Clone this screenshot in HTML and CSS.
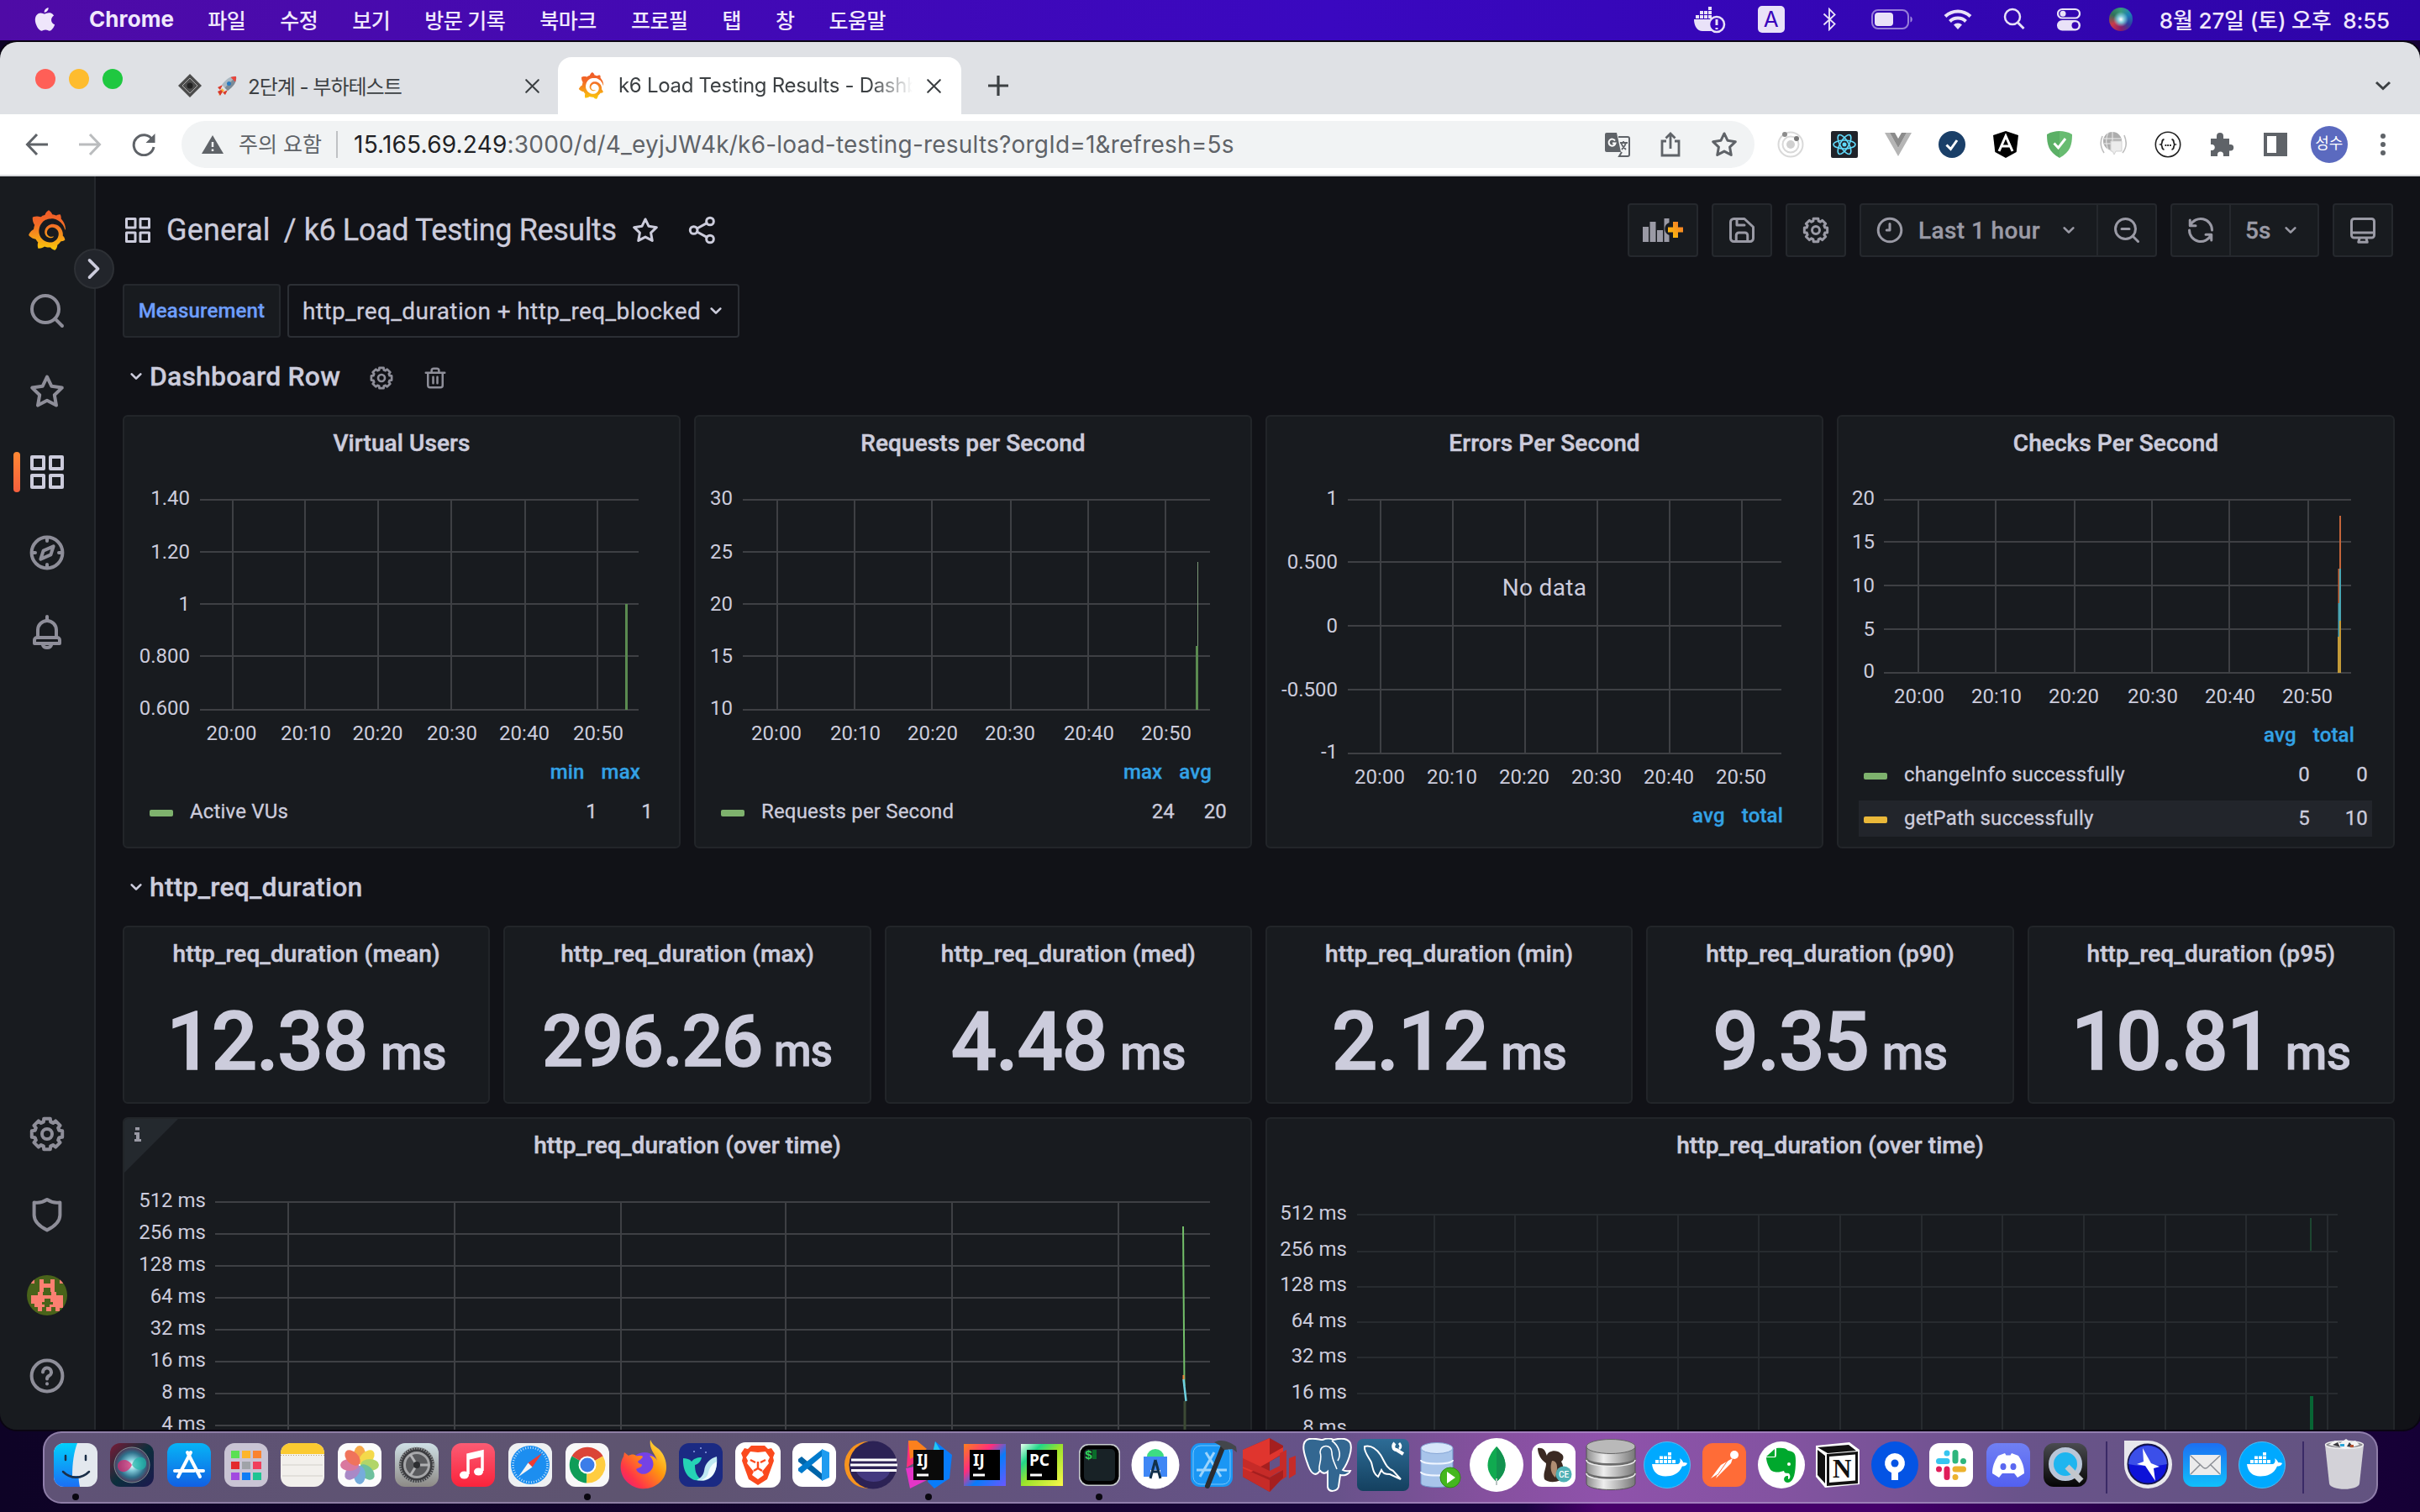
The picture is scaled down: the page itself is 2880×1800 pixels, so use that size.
FILE: index.html
```html
<!DOCTYPE html>
<html lang="ko">
<head>
<meta charset="utf-8">
<title>k6 Load Testing Results - Dashboards - Grafana</title>
<link rel="stylesheet" href="styles.css">
</head>
<body>
<svg class="defs" width="0" height="0" aria-hidden="true">
  <defs>
    <linearGradient id="gflame" x1="0" y1="0" x2="0" y2="1"><stop offset="0" stop-color="#f05a28"/><stop offset=".35" stop-color="#f26b27"/><stop offset="1" stop-color="#fbca0a"/></linearGradient>
    <linearGradient id="gplus" x1="0" y1="1" x2="1" y2="0"><stop offset="0" stop-color="#fbca0a"/><stop offset="1" stop-color="#f5712a"/></linearGradient>
    <linearGradient id="gfinder" x1="0" y1="0" x2="0" y2="1"><stop offset="0" stop-color="#00d0fc"/><stop offset="1" stop-color="#1b6ff3"/></linearGradient>
    <linearGradient id="gblue" x1="0" y1="0" x2="0" y2="1"><stop offset="0" stop-color="#07b4f6"/><stop offset="1" stop-color="#1160e4"/></linearGradient>
    <linearGradient id="gmail" x1="0" y1="0" x2="0" y2="1"><stop offset="0" stop-color="#1d6ff2"/><stop offset="1" stop-color="#10c0fb"/></linearGradient>
    <linearGradient id="gred" x1="0" y1="0" x2="0" y2="1"><stop offset="0" stop-color="#fb5c74"/><stop offset="1" stop-color="#fa233b"/></linearGradient>
    <linearGradient id="gsilver" x1="0" y1="0" x2="1" y2="0"><stop offset="0" stop-color="#8b8b8b"/><stop offset=".35" stop-color="#eee"/><stop offset="1" stop-color="#777"/></linearGradient>
    <linearGradient id="gset" x1="0" y1="0" x2="0" y2="1"><stop offset="0" stop-color="#cfe0e6"/><stop offset="1" stop-color="#8d8a86"/></linearGradient>
    <radialGradient id="gsiri" cx=".5" cy=".5" r=".55"><stop offset="0" stop-color="#fff"/><stop offset=".3" stop-color="#7fc9d8"/><stop offset=".65" stop-color="#2f6f8a"/><stop offset="1" stop-color="#5b2345"/></radialGradient>
    <linearGradient id="gsiribg" x1="0" y1="0" x2="1" y2="1"><stop offset="0" stop-color="#7a1a36"/><stop offset=".5" stop-color="#0c2f3c"/><stop offset="1" stop-color="#1c1850"/></linearGradient>
    <linearGradient id="gfox" x1="1" y1="0" x2="0" y2="1"><stop offset="0" stop-color="#fff44f"/><stop offset=".4" stop-color="#ff980e"/><stop offset=".75" stop-color="#ff3647"/><stop offset="1" stop-color="#e31587"/></linearGradient>
    <linearGradient id="gij" x1="0" y1="0" x2="1" y2="1"><stop offset="0" stop-color="#fc801d"/><stop offset=".35" stop-color="#fe2e7c"/><stop offset=".6" stop-color="#087cfa"/><stop offset="1" stop-color="#6b57ff"/></linearGradient>
    <linearGradient id="gpc" x1="0" y1="0" x2="1" y2="1"><stop offset="0" stop-color="#eafff0"/><stop offset=".25" stop-color="#21d789"/><stop offset=".5" stop-color="#9be22a"/><stop offset="1" stop-color="#fcf84a"/></linearGradient>
    <linearGradient id="gqt" x1="0" y1="0" x2="0" y2="1"><stop offset="0" stop-color="#4a4b50"/><stop offset="1" stop-color="#050505"/></linearGradient>
    <linearGradient id="gdisc" x1="0" y1="0" x2="0" y2="1"><stop offset="0" stop-color="#7080f4"/><stop offset="1" stop-color="#5360f0"/></linearGradient>
    <linearGradient id="gmysql" x1="0" y1="0" x2="0" y2="1"><stop offset="0" stop-color="#2d6c96"/><stop offset="1" stop-color="#14405f"/></linearGradient>
  </defs>
  <symbol id="i-grafana" viewBox="0 0 351 365"><path d="M342,161.2c-0.6-6.1-1.6-13.1-3.6-20.9c-2-7.7-5-16.2-9.4-25c-4.4-8.8-10.1-17.9-17.5-26.8c-2.9-3.5-6.1-6.9-9.5-10.2c5.1-20.3-6.2-37.9-6.2-37.9c-19.5-1.2-31.9,6.1-36.5,9.4c-0.8-0.3-1.5-0.7-2.3-1c-3.3-1.3-6.7-2.6-10.3-3.7c-3.5-1.1-7.1-2.1-10.8-3c-3.7-0.9-7.4-1.6-11.2-2.2c-0.7-0.1-1.3-0.2-2-0.3c-8.5-27.2-32.9-38.6-32.9-38.6c-27.3,17.3-32.4,41.5-32.4,41.5s-0.1,0.5-0.3,1.4c-1.5,0.4-3,0.9-4.5,1.3c-2.1,0.6-4.2,1.4-6.2,2.2c-2.1,0.8-4.1,1.6-6.2,2.5c-4.1,1.8-8.2,3.8-12.2,6c-3.9,2.2-7.7,4.6-11.4,7.1c-0.5-0.2-1-0.4-1-0.4c-37.8-14.4-71.3,2.9-71.3,2.9c-3.1,40.2,15.1,65.5,18.7,70.1c-0.9,2.5-1.7,5-2.5,7.5c-2.8,9.1-4.9,18.4-6.2,28.1c-0.2,1.4-0.4,2.8-0.5,4.2C18.8,192.7,8.5,228,8.5,228c29.1,33.5,63.1,35.6,63.1,35.6c0,0,0.1-0.1,0.1-0.1c4.3,7.7,9.3,15,14.9,21.9c2.4,2.9,4.8,5.6,7.4,8.3c-10.6,30.4,1.5,55.6,1.5,55.6c32.4,1.2,53.7-14.2,58.2-17.7c3.2,1.1,6.5,2.1,9.8,2.9c10,2.6,20.2,4.1,30.4,4.5c2.5,0.1,5.1,0.2,7.6,0.1l1.2,0l0.8,0l1.6,0l1.6-0.1l0,0.1c15.3,21.8,42.1,24.9,42.1,24.9c19.1-20.1,20.2-40.1,20.2-44.4l0,0c0-0.5,0-1.2,0-1.8c4-2.8,7.8-5.8,11.4-9.1c7.6-6.9,14.3-14.8,19.9-23.3c0.5-0.8,1-1.6,1.5-2.4c21.6,1.2,36.9-13.4,36.9-13.4c-3.6-22.5-16.4-33.5-19.1-35.6l-1-0.7c0.1-1.4,0.2-2.7,0.3-4.1c0.2-2.4,0.2-4.9,0.2-7.3l0-3.8l-0.2-3.5c0-0.7-0.1-1.3-0.2-1.9c-0.1-0.6-0.1-1.3-0.2-1.9l-0.2-1.9l-0.3-1.9c-0.4-2.5-0.8-4.9-1.4-7.4c-2.3-9.7-6.1-18.9-11-27.2c-5-8.3-11.2-15.6-18.3-21.8c-7-6.2-14.9-11.2-23.1-14.9c-8.3-3.7-16.9-6.1-25.5-7.2c-4.3-0.6-8.6-0.8-12.9-0.7l-3.2,0l-1.6,0.1c-0.6,0-1.2,0.1-1.7,0.1c-2.2,0.2-4.4,0.5-6.5,0.9c-8.6,1.6-16.7,4.7-23.8,9c-7.1,4.3-13.3,9.6-18.3,15.6c-5,6-8.9,12.7-11.6,19.6c-2.7,6.9-4.2,14.1-4.6,21c-0.1,1.7-0.1,3.5-0.1,5.2c0,0.4,0,0.9,0,1.3l0.1,1.4c0.1,0.8,0.1,1.7,0.2,2.5c0.3,3.5,1,6.9,1.9,10.1c1.9,6.5,4.9,12.4,8.6,17.4c3.7,5,8.2,9.1,12.9,12.4c4.7,3.2,9.8,5.5,14.8,7c5,1.5,10,2.1,14.7,2.1c1.2,0,2.3,0,3.5-0.1c1.2-0.1,2.2-0.2,3.3-0.4c1.1-0.2,2.2-0.4,3.3-0.7c1.1-0.2,2.1-0.6,3.1-0.9c2-0.7,4-1.5,5.7-2.4c1.8-0.9,3.4-2,5-3c0.4-0.3,0.9-0.6,1.3-1c1.6-1.3,1.9-3.7,0.6-5.3c-1.1-1.4-3.1-1.8-4.7-0.9c-0.4,0.2-0.8,0.4-1.2,0.6c-1.4,0.7-2.8,1.3-4.3,1.8c-1.5,0.5-3.1,0.9-4.7,1.2c-0.8,0.1-1.6,0.2-2.5,0.3c-0.8,0.1-1.7,0.1-2.5,0.1c-0.9,0-1.8,0-2.7-0.1c-0.8,0-1.8-0.1-2.7-0.3c-3.7-0.5-7.4-1.6-10.9-3.2c-3.6-1.6-7-3.8-10.1-6.6c-3.1-2.8-5.8-6.1-7.9-9.9c-2.1-3.8-3.6-8-4.3-12.4c-0.3-2.2-0.5-4.5-0.4-6.7l0.2-3.5c0.1-1.2,0.3-2.4,0.5-3.6c1.7-9.6,6.5-19,13.9-26.1c1.9-1.8,3.9-3.4,6-4.9c2.1-1.5,4.4-2.8,6.8-3.9c2.4-1.1,4.8-2,7.4-2.7c2.5-0.7,5.1-1.1,7.8-1.4c1.3-0.1,2.6-0.2,4-0.2l2.7,0l1.5,0.1c2.9,0.2,5.7,0.6,8.5,1.3c5.6,1.2,11.1,3.3,16.2,6.1c10.2,5.7,18.9,14.5,24.2,25.1c2.7,5.3,4.6,11,5.5,16.9c0.2,1.5,0.4,3,0.5,4.5l0.2,2.2l0,5.4c0,0.7-0.1,1.9-0.1,2.6c-0.1,1.6-0.3,3.3-0.5,4.9c-0.2,1.6-0.5,3.2-0.8,4.8c-0.3,1.6-0.7,3.2-1.1,4.7c-0.8,3.1-1.8,6.2-3,9.3c-2.4,6-5.6,11.8-9.4,17.1c-7.7,10.6-18.2,19.2-30.2,24.7c-6,2.7-12.3,4.7-18.8,5.7c-3.2,0.6-6.5,0.9-9.8,1l-4.6,0c-1.9,0-4-0.1-5.8-0.3c-7-0.5-13.9-1.8-20.7-3.7c-6.7-1.9-13.2-4.6-19.4-7.8c-12.3-6.6-23.4-15.6-32-26.5c-4.3-5.4-8.1-11.3-11.2-17.4c-3.1-6.1-5.6-12.6-7.4-19.1c-1.8-6.6-2.9-13.3-3.4-20.1l-0.1-1.9l0-7.6c0.1-3.3,0.4-6.8,0.8-10.2c0.4-3.4,1-6.9,1.7-10.3c0.7-3.4,1.5-6.8,2.5-10.2c1.9-6.7,4.3-13.2,7.1-19.3c5.7-12.2,13.1-23.1,22-31.8c2.2-2.2,4.5-4.2,6.9-6.2c2.4-1.9,4.9-3.7,7.5-5.4c2.5-1.7,5.2-3.2,7.9-4.6c1.3-0.7,2.7-1.4,4.1-2l4.2-1.8c2.8-1.2,5.7-2.2,8.7-3.1l4.4-1.3c1.5-0.4,3-0.8,4.5-1.1l4.6-1c2.3-0.4,4.6-0.8,6.9-1.1l5.2-0.6c1.7-0.2,2.6-0.2,3.8-0.4l3.9-0.3l3.2-0.1c2.9-0.1,5.9-0.1,8.8,0c5.8,0.2,11.5,0.9,17,1.9c11.1,2.1,21.5,5.6,31,10.3c9.5,4.6,17.9,10.3,25.3,16.5l2.7,2.4c0.9,0.8,1.7,1.6,2.6,2.4c0.9,0.8,1.7,1.6,2.5,2.4c0.8,0.8,1.6,1.6,2.4,2.5c3.1,3.3,6,6.6,8.6,10c5.2,6.7,9.4,13.5,12.7,19.9l1.2,2.4c0.4,0.8,0.8,1.6,1.1,2.4c0.4,0.8,0.7,1.5,1.1,2.3c0.3,0.8,0.7,1.5,1,2.3c1.2,3,2.4,5.9,3.3,8.6c1.5,4.4,2.6,8.3,3.5,11.7c0.3,1.4,1.6,2.3,3,2.1c1.5-0.1,2.6-1.3,2.6-2.8C342.6,170.4,342.5,166.1,342,161.2z"/></symbol>
  <symbol id="i-apps" viewBox="0 0 24 24"><path fill="currentColor" d="M10,13H3a1,1,0,0,0-1,1v7a1,1,0,0,0,1,1h7a1,1,0,0,0,1-1V14A1,1,0,0,0,10,13ZM9,20H4V15H9ZM21,2H14a1,1,0,0,0-1,1v7a1,1,0,0,0,1,1h7a1,1,0,0,0,1-1V3A1,1,0,0,0,21,2ZM20,9H15V4h5Zm1,4H14a1,1,0,0,0-1,1v7a1,1,0,0,0,1,1h7a1,1,0,0,0,1-1V14A1,1,0,0,0,21,13Zm-1,7H15V15h5ZM10,2H3A1,1,0,0,0,2,3v7a1,1,0,0,0,1,1h7a1,1,0,0,0,1-1V3A1,1,0,0,0,10,2ZM9,9H4V4H9Z"/></symbol>
  <symbol id="i-star" viewBox="0 0 24 24"><path class="st" d="M12 3.3l2.7 5.6 6.2.9-4.5 4.3 1.1 6.2L12 17.4l-5.5 2.9 1.1-6.2L3.100 9.800l6.200-.9z"/></symbol>
  <symbol id="i-share" viewBox="0 0 24 24"><g class="st"><circle cx="18" cy="5" r="2.900"/><circle cx="5.100" cy="12" r="2.900"/><circle cx="18" cy="19" r="2.900"/><path d="M7.700 10.700L15.400 6.400M7.700 13.300l7.700 4.300"/></g></symbol>
  <symbol id="i-search" viewBox="0 0 24 24"><g class="st"><circle cx="11" cy="11" r="8"/><path d="M21 21l-4.300-4.300"/></g></symbol>
  <symbol id="i-zoomout" viewBox="0 0 24 24"><g class="st"><circle cx="11" cy="11" r="8"/><path d="M21 21l-4.300-4.300M8 11h6"/></g></symbol>
  <symbol id="tooth" viewBox="0 0 24 24"><path class="st" d="M9.130 5.070L9.930 4.790 10.070 2.900H13.930L14.070 4.790 14.870 5.070"/></symbol>
  <symbol id="i-cog" viewBox="0 0 24 24"><use href="#tooth"/><use href="#tooth" transform="rotate(45 12 12)"/><use href="#tooth" transform="rotate(90 12 12)"/><use href="#tooth" transform="rotate(135 12 12)"/><use href="#tooth" transform="rotate(180 12 12)"/><use href="#tooth" transform="rotate(225 12 12)"/><use href="#tooth" transform="rotate(270 12 12)"/><use href="#tooth" transform="rotate(315 12 12)"/><circle class="st" cx="12" cy="12" r="3"/></symbol>
  <symbol id="i-trash" viewBox="0 0 24 24"><path class="st" d="M3 7h18M5 7v12a2 2 0 0 0 2 2h10a2 2 0 0 0 2-2V7M8.500 6.500V5a2 2 0 0 1 2-2h3a2 2 0 0 1 2 2v1.500M10 11v6M14 11v6"/></symbol>
  <symbol id="i-compass" viewBox="0 0 24 24"><g class="st"><circle cx="12" cy="12" r="9.200"/><path d="M12 3v2M12 19v2M3 12h2M19 12h2M15.800 8.200l-1.600 5-6 2.600 1.600-5z"/></g></symbol>
  <symbol id="i-bell" viewBox="0 0 24 24"><path class="st" d="M12 2v2M6.500 14V10a5.500 5.500 0 0 1 11 0v4M6 14.500h12a1.500 1.500 0 0 1 1.500 1.500v2h-15v-2A1.500 1.500 0 0 1 6 14.500zM9.300 18.500a2.800 2.800 0 0 0 5.400 0"/></symbol>
  <symbol id="i-shield" viewBox="0 0 24 24"><path class="st" d="M12 3c-2.500 1.700-5 2.200-7.700 1.700v7.500c0 3.800 3.200 6.700 7.700 9 4.500-2.300 7.700-5.200 7.700-9V4.700C17 5.200 14.500 4.700 12 3z"/></symbol>
  <symbol id="i-help" viewBox="0 0 24 24"><g class="st"><circle cx="12" cy="12" r="9.200"/><path d="M9.500 9.700a2.500 2.500 0 1 1 3.700 2.200c-.8.500-1.200.9-1.200 1.800M12 16.600v.1"/></g></symbol>
  <symbol id="i-down" viewBox="0 0 24 24"><path class="st" d="M8 10l4 4 4-4"/></symbol>
  <symbol id="i-right" viewBox="0 0 24 24"><path class="st" d="M9 6.500l5.500 5.500L9 17.500"/></symbol>
  <symbol id="i-save" viewBox="0 0 24 24"><path class="st" d="M5.500 3H14l7 6.500V18.500A2.500 2.500 0 0 1 18.500 21h-13A2.500 2.500 0 0 1 3 18.500v-13A2.500 2.500 0 0 1 5.500 3zM8 3.500V8h6M7.500 20.500V16a2 2 0 0 1 2-2h5a2 2 0 0 1 2 2v4.500"/></symbol>
  <symbol id="i-clock" viewBox="0 0 24 24"><g class="st"><circle cx="12" cy="12" r="9.200"/><path d="M12 7v5H9.500"/></g></symbol>
  <symbol id="i-sync" viewBox="0 0 24 24"><path class="st" d="M3.500 4v4.500H8M3.800 8.300A9 9 0 0 1 21 12M20.500 20v-4.500H16M20.200 15.700A9 9 0 0 1 3 12"/></symbol>
  <symbol id="i-monitor" viewBox="0 0 24 24"><path class="st" d="M5 3h14a2 2 0 0 1 2 2v11a2 2 0 0 1-2 2H5a2 2 0 0 1-2-2V5a2 2 0 0 1 2-2zM3 14h18M9.500 18l-1 3.500h7l-1-3.500"/></symbol>
  <symbol id="i-x" viewBox="0 0 24 24"><path class="st" d="M5 5l14 14M19 5L5 19"/></symbol>
  <symbol id="d-docker" viewBox="0 0 64 64"><circle cx="32" cy="32" r="27.500" fill="#00a9ff" stroke="#4fbdf5"/><path fill="#fff" d="M14 31h31c3-1 3-5 2-7 3 2 4 4 4 5 2 0 4 0 5 1-1 3-4 3.500-6 3.500C46 43 38 45.500 30 45.500c-9 0-15-5-16-14.500zM18 26h4v4h-4zM23 26h4v4h-4zM28 26h4v4h-4zM33 26h4v4h-4zM38 26h4v4h-4zM23 21.500h4v3.500h-4zM28 21.500h4v3.500h-4zM33 21.500h4v3.500h-4zM33 17h4v3.500h-4z"/></symbol>
</svg>

<header class="menubar">
  <nav class="menus">
    <svg class="apple" viewBox="0 0 24 30" width="26" height="32"><path fill="#efe6fb" d="M16.400 2c.1 2.800-2.200 5.300-4.700 5.200C11.400 4.600 13.900 2 16.400 2zM12.200 9c1-.1 2.800-1.300 5-1.200 1 0 3.600.4 5.200 2.900-4.300 2.700-3.500 8.500 1 10.200-.9 2.700-3.200 7-5.800 7-1.700 0-2.300-1.100-4.500-1.100s-2.900 1.100-4.500 1.100C5.600 28 1.500 20.700 1.500 15.800c0-5 3.100-7.800 6.100-7.800 2 0 3.600 1.100 4.600 1z"/></svg>
    <b class="app">Chrome</b><span>파일</span><span>수정</span><span>보기</span><span>방문 기록</span><span>북마크</span><span>프로필</span><span>탭</span><span>창</span><span>도움말</span>
  </nav>
  <div class="status">
    <svg class="s-docker" viewBox="0 0 40 34" width="40" height="34"><g fill="#e9e2f8"><path d="M2 17h22c2 0 3 1 3 2-4 2-5 8-1 12H12C6 31 2 25 2 17zM4 12h4v4H4zM9 12h4v4H9zM14 12h4v4h-4zM19 12h4v4h-4zM9 7h4v4H9zM14 7h4v4h-4zM19 7h4v4h-4zM19 2h4v4h-4z"/></g><circle cx="29" cy="23" r="9" fill="#3905bb" stroke="#e9e2f8" stroke-width="2.500"/><path d="M29 17v7M29 27v2" stroke="#e9e2f8" stroke-width="3"/></svg>
    <span class="s-a">A</span>
    <svg class="s-bt" viewBox="0 0 20 30" width="20" height="28"><path fill="none" stroke="#e9e2f8" stroke-width="2" d="M3 8l14 13-7 7V2l7 7L3 22"/></svg>
    <svg class="s-bat" viewBox="0 0 50 24" width="50" height="24"><rect x="1" y="1" width="43" height="22" rx="7" fill="none" stroke="#e9e2f8" stroke-opacity=".55" stroke-width="2"/><rect x="4" y="4" width="22" height="16" rx="4" fill="#e9e2f8"/><path d="M46.500 8.500c3 1 3 6 0 7z" fill="#e9e2f8" opacity=".6"/></svg>
    <svg class="s-wifi" viewBox="0 0 34 26" width="34" height="26"><g fill="none" stroke="#e9e2f8" stroke-width="4"><path d="M2 9.500a21.500 21.500 0 0 1 30 0M7.500 15.500a13.500 13.500 0 0 1 19 0"/></g><path fill="#e9e2f8" d="M17 25l-5-5.500a7 7 0 0 1 10 0z"/></svg>
    <svg class="s-find" viewBox="0 0 28 28" width="28" height="28"><circle cx="12" cy="11" r="9" fill="none" stroke="#e9e2f8" stroke-width="2.500"/><path d="M18.500 18l7 7" stroke="#e9e2f8" stroke-width="3"/></svg>
    <svg class="s-cc" viewBox="0 0 28 28" width="28" height="28"><rect x="1" y="2" width="26" height="10.500" rx="5.250" fill="none" stroke="#e9e2f8" stroke-width="2.200"/><circle cx="7" cy="7.200" r="3.500" fill="#e9e2f8"/><rect x="0" y="15" width="28" height="12.500" rx="6.200" fill="#e9e2f8"/><circle cx="21.500" cy="21.200" r="4" fill="#3804b4"/></svg>
    <span class="s-siri"></span>
    <span class="clock">8월 27일 (토) 오후&nbsp; 8:55</span>
  </div>
</header>

<div class="window">
  <div class="tabs">
    <div class="lights"><i class="l-r"></i><i class="l-y"></i><i class="l-g"></i></div>
    <div class="tab">
      <svg viewBox="0 0 28 28" width="28" height="28"><path fill="#4c4c4c" d="M14 0l14 14-14 14L0 14z"/><path d="M14 5l9 9-9 9-9-9z" fill="none" stroke="#aaa"/><circle cx="14" cy="14" r="3.500" fill="#222"/></svg>
      <svg class="rocket" viewBox="0 0 26 26" width="26" height="26"><path fill="#f9b233" d="M7 16l3 3-7 6z"/><path fill="#d93a2b" d="M8 12l-6 3 3 3zM14 18l-3 6-3-3zM2 20l4-2 2 2-3 5z"/><path fill="#aab8c2" d="M24 2c1 6-3 12-10 17l-7-7C12 5 18 1 24 2z"/><path fill="#7d8b96" d="M24 2c1 6-3 12-10 17l-3.500-3.500z"/><path fill="#e8453c" d="M24 2c.3 2.500-.3 4.500-1 6.500L17.500 3C20 2 22 1.700 24 2z"/><circle cx="15.500" cy="10.500" r="2.500" fill="#2a7bc0"/></svg>
      <span class="tab-t ko">2단계 - 부하테스트</span>
      <svg class="x" width="25" height="25"><use href="#i-x"/></svg>
    </div>
    <div class="tab active">
      <svg width="31" height="32" fill="url(#gflame)"><use href="#i-grafana"/></svg>
      <span class="tab-t fade">k6 Load Testing Results - Dashboards</span>
      <svg class="x" width="25" height="25"><use href="#i-x"/></svg>
    </div>
    <svg class="plus" viewBox="0 0 24 24" width="24" height="24"><path d="M12 0v24M0 12h24" stroke="#3c4043" stroke-width="3.200"/></svg>
    <svg class="tabmenu" viewBox="0 0 20 12" width="20" height="12"><path d="M2 2l8 7.500L18 2" fill="none" stroke="#3c4043" stroke-width="3"/></svg>
  </div>
  <div class="toolbar">
    <div class="navbtns">
      <svg viewBox="0 0 28 28" width="28" height="28"><path d="M27 14H3M14 2L2.500 14 14 26" fill="none" stroke="#5f6368" stroke-width="3"/></svg>
      <svg viewBox="0 0 28 28" width="28" height="28"><path d="M1 14h24M14 2l11.500 12L14 26" fill="none" stroke="#babcbe" stroke-width="3"/></svg>
      <svg viewBox="0 0 30 28" width="30" height="28"><path d="M25.500 8.500A12 12 0 1 0 27 17" fill="none" stroke="#5f6368" stroke-width="3"/><path d="M28.500 1v11H17.500z" fill="#5f6368"/></svg>
    </div>
    <div class="omnibox">
      <svg viewBox="0 0 26 22" width="26" height="22"><path fill="#5f6368" d="M13 0l13 22H0z"/><path d="M13 8v6M13 16.500V19" stroke="#f1f3f4" stroke-width="2.500"/></svg>
      <span class="warn">주의 요함</span>
      <span class="url"><b>15.165.69.249</b>:3000/d/4_eyjJW4k/k6-load-testing-results?orgId=1&amp;refresh=5s</span>
      <svg viewBox="0 0 30 30" width="30" height="30"><path fill="#5f6368" d="M2 1h12l5 23H2a2 2 0 0 1-2-2V3a2 2 0 0 1 2-2z"/><path d="M16 6h11a2 2 0 0 1 2 2v19a2 2 0 0 1-2 2H17l3-5" fill="none" stroke="#5f6368" stroke-width="2"/><path d="M12 10.500a4 4 0 1 0 .5 3H9" fill="none" stroke="#fff" stroke-width="2"/><path d="M18 13h9M22 11v2M25 13c-1 4-3 6-5 8M19.500 14c1 3 3 5 5.500 7" fill="none" stroke="#5f6368" stroke-width="1.800"/></svg>
      <svg viewBox="0 0 24 30" width="24" height="30"><path d="M7 11H2v17h20V11h-5M12 20V2M6.500 7.500L12 2l5.500 5.500" fill="none" stroke="#5f6368" stroke-width="2.800"/></svg>
      <svg class="bm" width="36" height="36"><use href="#i-star"/></svg>
    </div>
    <div class="exts">
      <svg viewBox="0 0 32 32"><g fill="none" stroke="#d9d9d9" stroke-width="2"><circle cx="16" cy="16" r="14.500"/><circle cx="16" cy="16" r="9.500"/></g><circle cx="16" cy="16" r="5" fill="#d0d0d0"/><circle cx="9" cy="4" r="3" fill="#8c8c8c"/><circle cx="23" cy="9" r="3" fill="#777"/></svg>
      <svg viewBox="0 0 32 32"><rect width="32" height="32" rx="2" fill="#20232a"/><g fill="none" stroke="#61dafb" stroke-width="1.600"><ellipse cx="16" cy="16" rx="13" ry="5"/><ellipse cx="16" cy="16" rx="13" ry="5" transform="rotate(60 16 16)"/><ellipse cx="16" cy="16" rx="13" ry="5" transform="rotate(120 16 16)"/></g><circle cx="16" cy="16" r="2.500" fill="#61dafb"/></svg>
      <svg viewBox="0 0 32 32"><path fill="#b5b5b5" d="M0 2h6l10 18L26 2h6L16 30z"/><path fill="#8b8b8b" d="M6 2h6l4 7 4-7h6L16 20z"/></svg>
      <svg viewBox="0 0 32 32"><circle cx="16" cy="16" r="16" fill="#1a3f68"/><path d="M9.500 16.500l5 5L22 11" fill="none" stroke="#fff" stroke-width="3"/></svg>
      <svg viewBox="0 0 32 32"><path fill="#000" d="M16 0l15 5-2.300 20L16 32 3.300 25 1 5z"/><path d="M8 24l8-18 8 18M11.500 18h9" fill="none" stroke="#fff" stroke-width="3"/></svg>
      <svg viewBox="0 0 32 32"><path fill="#68bc71" d="M16 0c5 0 10 1 15 4 0 12-2 21-15 28z"/><path fill="#5bb066" d="M16 0C11 0 6 1 1 4c0 12 2 21 15 28z"/><path d="M9.500 14.500l5 5.500L23 9" fill="none" stroke="#fff" stroke-width="3"/></svg>
      <svg viewBox="0 0 32 32"><circle cx="15" cy="12" r="11" fill="#adadad"/><path d="M5 9h20M5 15h20M15 1v22M10 2c-3 6-3 14 0 20" stroke="#eee" fill="none"/><path d="M3 6c-3 7-2 14 2 20M29 5c3 7 3 15-2 21" stroke="#bdbdbd" stroke-width="1.600" fill="none"/><path fill="#ececec" stroke="#d2d2d2" d="M13 12h13v12h-7l-2 4-2-4h-2z"/></svg>
      <svg viewBox="0 0 32 32"><circle cx="16" cy="16" r="14.700" fill="#fff" stroke="#222" stroke-width="1.600"/><path d="M11.500 10c-4 0-1 5-4 6 3 1 0 6 4 6M20.500 10c4 0 1 5 4 6-3 1 0 6-4 6M12.500 17h1.800M15.200 17H17M18 17h1.800" fill="none" stroke="#222" stroke-width="1.800"/></svg>
      <svg viewBox="0 0 32 32"><path fill="#5f6368" d="M3 9h7V6a4 4 0 0 1 8 0v3h7v7h1.500a3.700 3.700 0 0 1 0 7.400H25V30h-7v-2a3.500 3.500 0 0 0-7 0v2H3v-7h2a3.600 3.600 0 0 0 0-7H3z"/></svg>
      <svg viewBox="0 0 32 32"><path fill="#5f6368" fill-rule="evenodd" d="M2 2h28v28H2zM6 6v20h11V6z"/></svg>
      <span class="avatar">성수</span>
      <svg viewBox="0 0 32 32"><g fill="#5f6368"><circle cx="16" cy="6" r="3"/><circle cx="16" cy="16" r="3"/><circle cx="16" cy="26" r="3"/></g></svg>
    </div>
  </div>

  <div class="grafana">
    <aside class="side">
      <svg class="logo" width="46" height="48" fill="url(#gflame)"><use href="#i-grafana"/></svg>
      <svg><use href="#i-search"/></svg>
      <svg><use href="#i-star"/></svg>
      <svg class="on"><use href="#i-apps"/></svg>
      <svg><use href="#i-compass"/></svg>
      <svg><use href="#i-bell"/></svg>
      <svg class="push"><use href="#i-cog"/></svg>
      <svg><use href="#i-shield"/></svg>
      <svg class="face" viewBox="0 0 48 48"><clipPath id="round"><circle cx="24" cy="24" r="24"/></clipPath><g clip-path="url(#round)"><path fill="#49631a" d="M0 0h48v48H0z"/><path fill="#fb8071" d="M15 5h5v5h8V5h5v15h-5v-5h-8v5h-5zM5 5h4v5H5zM39 5h4v5h-4zM5 24h8v-4h6v4h10v-4h6v4h8v15h-4v4h-5v-5h-5v5h-6v-5h-5v5h-5v-5H9v-4H5z"/><path fill="#49631a" d="M18 32h3v-4h7v4h3v3h-4v3h-6v-3h-3z"/></g></svg>
      <svg><use href="#i-help"/></svg>
      <button class="expand" aria-label="Expand"><svg><use href="#i-right"/></svg></button>
      <i class="mark"></i>
    </aside>

    <main class="main">
      <div class="head">
        <h1><svg width="36" height="36"><use href="#i-apps"/></svg><span>General</span><span class="sl">/</span><span class="name">k6 Load Testing Results</span><svg class="h-star" width="36" height="36"><use href="#i-star"/></svg><svg class="h-share" width="36" height="36"><use href="#i-share"/></svg></h1>
        <div class="actions">
          <div class="btn wide"><svg viewBox="0 0 48 28" width="48" height="28"><path fill="#9a9aa5" d="M0 10h7v18H0zM8.500 4h7v24h-7zM17 14h7v14h-7zM25.500 0h6v5a8 8 0 0 0 0 15v8h-6z"/><path fill="url(#gplus)" d="M36 4h6v6.500h6v6h-6V23h-6v-6.500h-6v-6h6z"/></svg></div>
          <div class="btn"><svg><use href="#i-save"/></svg></div>
          <div class="btn"><svg><use href="#i-cog"/></svg></div>
          <div class="group"><div class="time"><svg><use href="#i-clock"/></svg><span>Last 1 hour</span><svg class="dn"><use href="#i-down"/></svg></div><div class="seg"><svg><use href="#i-zoomout"/></svg></div></div>
          <div class="group"><div class="seg first"><svg><use href="#i-sync"/></svg></div><div class="every"><span>5s</span><svg class="dn"><use href="#i-down"/></svg></div></div>
          <div class="btn"><svg><use href="#i-monitor"/></svg></div>
        </div>
      </div>
      <div class="vars"><label>Measurement</label><div class="select">http_req_duration + http_req_blocked<svg class="dn"><use href="#i-down"/></svg></div></div>

      <div class="rowhead"><svg class="dn"><use href="#i-down"/></svg><h2>Dashboard Row</h2><svg class="r-cog"><use href="#i-cog"/></svg><svg class="r-bin"><use href="#i-trash"/></svg></div>
      <div class="grid4">
        <section class="panel">
          <h3>Virtual Users</h3>
          <svg class="chart" viewBox="148 560 660 334" height="334">
            <path class="g" d="M238 595H760M238 657H760M238 719H760M238 781H760M238 845H760M277 595V845M363 595V845M450 595V845M537 595V845M625 595V845M711 595V845"/>
            <path stroke="#5a8a50" stroke-width="3" d="M745.500 719V845"/>
            <g class="y"><text x="226" y="601">1.40</text><text x="226" y="665">1.20</text><text x="226" y="727">1</text><text x="226" y="789">0.800</text><text x="226" y="851">0.600</text></g>
            <g class="xl"><text x="275.500" y="881">20:00</text><text x="364" y="881">20:10</text><text x="449.500" y="881">20:20</text><text x="538" y="881">20:30</text><text x="624" y="881">20:40</text><text x="712" y="881">20:50</text></g>
          </svg>
          <div class="legend">
            <div class="lh"><span>min</span><span>max</span></div>
            <div class="lr"><i class="green"></i><span class="nm">Active VUs</span><span class="v">1</span><span class="v v2">1</span></div>
          </div>
        </section>
        <section class="panel">
          <h3>Requests per Second</h3>
          <svg class="chart" viewBox="828 560 660 334" height="334">
            <path class="g" d="M884 595H1440M884 657H1440M884 719H1440M884 781H1440M884 845H1440M925 595V845M1017 595V845M1109 595V845M1203 595V845M1295 595V845M1387 595V845"/>
            <path stroke="#7d9a78" stroke-width="1" d="M1425.500 669V770"/><path stroke="#5a8a50" stroke-width="3" d="M1424.500 769V845"/>
            <g class="y"><text x="872" y="601">30</text><text x="872" y="665">25</text><text x="872" y="727">20</text><text x="872" y="789">15</text><text x="872" y="851">10</text></g>
            <g class="xl"><text x="924" y="881">20:00</text><text x="1018" y="881">20:10</text><text x="1110" y="881">20:20</text><text x="1202" y="881">20:30</text><text x="1296" y="881">20:40</text><text x="1388" y="881">20:50</text></g>
          </svg>
          <div class="legend">
            <div class="lh"><span>max</span><span>avg</span></div>
            <div class="lr"><i class="green"></i><span class="nm">Requests per Second</span><span class="v">24</span><span class="v v2 n">20</span></div>
          </div>
        </section>
        <section class="panel">
          <h3>Errors Per Second</h3>
          <svg class="chart" viewBox="1508 560 660 386" height="386">
            <path class="g" d="M1604 595H2120M1604 669H2120M1604 745H2120M1604 821H2120M1604 897H2120M1643 595V897M1729 595V897M1815 595V897M1901 595V897M1987 595V897M2073 595V897"/>
            <text class="nodata" x="1838" y="709">No data</text>
            <g class="y"><text x="1592" y="601">1</text><text x="1592" y="677">0.500</text><text x="1592" y="753">0</text><text x="1592" y="829">-0.500</text><text x="1592" y="903">-1</text></g>
            <g class="xl"><text x="1642" y="933">20:00</text><text x="1728" y="933">20:10</text><text x="1814" y="933">20:20</text><text x="1900" y="933">20:30</text><text x="1986" y="933">20:40</text><text x="2072" y="933">20:50</text></g>
          </svg>
          <div class="legend"><div class="lh"><span>avg</span><span>total</span></div></div>
        </section>
        <section class="panel checks">
          <h3>Checks Per Second</h3>
          <svg class="chart" viewBox="2188 560 660 290" height="290">
            <path class="g" d="M2242 595H2798M2242 645H2798M2242 697H2798M2242 749H2798M2242 801H2798M2283 595V801M2375 595V801M2469 595V801M2561 595V801M2653 595V801M2747 595V801"/>
            <path stroke="#c4653a" stroke-width="2" d="M2785 614V677M2783.500 677V718"/><path stroke="#4aa6b3" stroke-width="2" d="M2785 677V739M2783.500 718V758"/><path stroke="#c39a38" stroke-width="2" d="M2785 739V801M2783 758V801"/>
            <g class="y"><text x="2231" y="601">20</text><text x="2231" y="653">15</text><text x="2231" y="705">10</text><text x="2231" y="757">5</text><text x="2231" y="807">0</text></g>
            <g class="xl"><text x="2284" y="837">20:00</text><text x="2376" y="837">20:10</text><text x="2468" y="837">20:20</text><text x="2562" y="837">20:30</text><text x="2654" y="837">20:40</text><text x="2746" y="837">20:50</text></g>
          </svg>
          <div class="legend">
            <div class="lh"><span>avg</span><span>total</span></div>
            <div class="lr"><i class="green"></i><span class="nm">changeInfo successfully</span><span class="v">0</span><span class="v v2 t">0</span></div>
            <div class="lr alt"><i class="gold"></i><span class="nm">getPath successfully</span><span class="v">5</span><span class="v v2 t">10</span></div>
          </div>
        </section>
      </div>

      <div class="rowhead"><svg class="dn"><use href="#i-down"/></svg><h2>http_req_duration</h2></div>
      <div class="grid6">
        <section class="panel stat"><h3>http_req_duration (mean)</h3><p>12.38<small>ms</small></p></section>
        <section class="panel stat sm"><h3>http_req_duration (max)</h3><p>296.26<small>ms</small></p></section>
        <section class="panel stat"><h3>http_req_duration (med)</h3><p>4.48<small>ms</small></p></section>
        <section class="panel stat"><h3>http_req_duration (min)</h3><p>2.12<small>ms</small></p></section>
        <section class="panel stat"><h3>http_req_duration (p90)</h3><p>9.35<small>ms</small></p></section>
        <section class="panel stat"><h3>http_req_duration (p95)</h3><p>10.81<small>ms</small></p></section>
      </div>
      <div class="grid2">
        <section class="panel tall">
          <svg class="corner" viewBox="0 0 64 64" width="64" height="64"><path fill="#24292e" d="M0 0h64L0 64z"/><path fill="#9a9aa5" d="M13 10h5v3.500h-5zM12 16h6v8h2v3h-8v-3h2v-5h-2z"/></svg>
          <h3>http_req_duration (over time)</h3>
          <svg class="chart" viewBox="148 1396 1340 306" height="306">
            <path class="g" d="M256 1431H1440M256 1469H1440M256 1507H1440M256 1545H1440M256 1583H1440M256 1621H1440M256 1659H1440M256 1697H1440M343 1431V1702M541 1431V1702M739 1431V1702M935 1431V1702M1133 1431V1702M1331 1431V1702"/>
            <path stroke="#73bf69" stroke-width="2" d="M1408 1460L1409.500 1650"/><path stroke="#3c4a35" stroke-width="3" d="M1410 1668V1702"/><path stroke="#ef843c" stroke-width="2" d="M1408.500 1637V1643"/><path stroke="#6ed0e0" stroke-width="2.500" d="M1408.500 1642L1411.500 1668"/>
            <g class="y"><text x="245" y="1437">512 ms</text><text x="245" y="1475">256 ms</text><text x="245" y="1513">128 ms</text><text x="245" y="1551">64 ms</text><text x="245" y="1589">32 ms</text><text x="245" y="1627">16 ms</text><text x="245" y="1665">8 ms</text><text x="245" y="1703">4 ms</text></g>
          </svg>
        </section>
        <section class="panel tall">
          <h3>http_req_duration (over time)</h3>
          <svg class="chart" viewBox="1508 1396 1340 306" height="306">
            <path class="g faint" d="M1615 1446H2782M1615 1490H2782M1615 1532H2782M1615 1574H2782M1615 1616H2782M1615 1659H2782M1707 1446V1702M1803 1446V1702M1901 1446V1702M1997 1446V1702M2093 1446V1702M2190 1446V1702M2287 1446V1702M2383 1446V1702M2480 1446V1702M2577 1446V1702M2673 1446V1702M2770 1446V1702"/>
            <path stroke="#1d4630" stroke-width="2" d="M2750 1450V1489"/><path stroke="#086534" stroke-width="4" d="M2751 1662V1702"/>
            <g class="y"><text x="1603" y="1452">512 ms</text><text x="1603" y="1495">256 ms</text><text x="1603" y="1537">128 ms</text><text x="1603" y="1580">64 ms</text><text x="1603" y="1622">32 ms</text><text x="1603" y="1665">16 ms</text><text x="1603" y="1707">8 ms</text></g>
          </svg>
        </section>
      </div>
    </main>
  </div>
</div>

<footer class="dock">
  <div class="ic run"><svg viewBox="0 0 64 64"><rect x="6" y="6" width="52" height="52" rx="12" fill="#e3e8ee"/><path fill="url(#gfinder)" d="M34 6H18A12 12 0 0 0 6 18v28a12 12 0 0 0 12 12h19c-1-5-1.500-9-1.500-13H28C28 30 30 16 34 6z"/><path d="M20 21v5M44 21v5M17 40c9 9 22 9 31 0" stroke="#1b2f48" stroke-width="2.500" fill="none" stroke-linecap="round"/></svg></div>
  <div class="ic"><svg viewBox="0 0 64 64"><rect x="6" y="6" width="52" height="52" rx="12" fill="url(#gsiribg)"/><circle cx="32" cy="32" r="21" fill="url(#gsiri)" stroke="#7c8e92"/><path fill="#d8286f" opacity=".75" d="M32 32c-6-10-18-6-17 2s12 9 17-2z"/><path fill="#1fb6a8" opacity=".7" d="M32 32c3-12 17-12 17-2s-12 10-17 2z"/></svg></div>
  <div class="ic"><svg viewBox="0 0 64 64"><rect x="6" y="6" width="52" height="52" rx="12" fill="url(#gblue)"/><path d="M34 17L19 46M30 17l15 29M15 39h23M42 39h7" stroke="#fff" stroke-width="4" stroke-linecap="round"/></svg></div>
  <div class="ic"><svg viewBox="0 0 64 64"><rect x="6" y="6" width="52" height="52" rx="12" fill="#c9c4d4"/><g><path fill="#5be052" d="M14 15h10v9H14z"/><path fill="#fdb52a" d="M27 15h10v9H27z"/><path fill="#fa8330" d="M40 15h10v9H40z"/><path fill="#e32a2d" d="M14 28h10v9H14z"/><path fill="#a0a3a8" d="M27 28h10v9H27z"/><path fill="#f03f5c" d="M40 28h10v9H40z"/><path fill="#a24ae0" d="M14 41h10v9H14z"/><path fill="#0f7df5" d="M27 41h10v9H27z"/><path fill="#1fc493" d="M40 41h10v9H40z"/></g></svg></div>
  <div class="ic"><svg viewBox="0 0 64 64"><rect x="6" y="6" width="52" height="52" rx="12" fill="#f2f0ec"/><path fill="#fbca31" d="M18 6h28a12 12 0 0 1 12 12v1H6v-1A12 12 0 0 1 18 6z"/><path d="M6 20.500h52" stroke="#b8a676" stroke-dasharray="1 2"/><path d="M8 32h48M8 45h48" stroke="#d3d0ca"/></svg></div>
  <div class="ic"><svg viewBox="0 0 64 64"><rect x="6" y="6" width="52" height="52" rx="12" fill="#fcfcfc"/><g opacity=".85"><ellipse cx="32" cy="20" rx="7" ry="11" fill="#f79b2c"/><ellipse cx="32" cy="20" rx="7" ry="11" fill="#f3d42b" transform="rotate(45 32 32)"/><ellipse cx="32" cy="20" rx="7" ry="11" fill="#a5cf50" transform="rotate(90 32 32)"/><ellipse cx="32" cy="20" rx="7" ry="11" fill="#55b68d" transform="rotate(135 32 32)"/><ellipse cx="32" cy="20" rx="7" ry="11" fill="#5f9fd6" transform="rotate(180 32 32)"/><ellipse cx="32" cy="20" rx="7" ry="11" fill="#9b76bd" transform="rotate(225 32 32)"/><ellipse cx="32" cy="20" rx="7" ry="11" fill="#d4638f" transform="rotate(270 32 32)"/><ellipse cx="32" cy="20" rx="7" ry="11" fill="#ee5c40" transform="rotate(315 32 32)"/></g></svg></div>
  <div class="ic"><svg viewBox="0 0 64 64"><rect x="6" y="6" width="52" height="52" rx="12" fill="url(#gset)"/><circle cx="32" cy="32" r="21" fill="#3c3d40"/><circle cx="32" cy="32" r="20" fill="none" stroke="#909294" stroke-width="3" stroke-dasharray="1.500 1.500"/><circle cx="32" cy="32" r="14.500" fill="#5a5b5e" stroke="#a5a6a8" stroke-width="3"/><path d="M32 32h15M32 32l-8-13M32 32l-8 13" stroke="#b0b1b3" stroke-width="3"/><circle cx="32" cy="32" r="4" fill="#2c2d30"/></svg></div>
  <div class="ic"><svg viewBox="0 0 64 64"><rect x="6" y="6" width="52" height="52" rx="12" fill="url(#gred)"/><path d="M26 43V20l17-4v23" stroke="#fff" stroke-width="3.500" fill="none"/><path d="M26 20l17-4v6l-17 4z" fill="#fff"/><ellipse cx="21.500" cy="44" rx="5.500" ry="4.500" fill="#fff"/><ellipse cx="38.500" cy="40" rx="5.500" ry="4.500" fill="#fff"/></svg></div>
  <div class="ic"><svg viewBox="0 0 64 64"><rect x="6" y="6" width="52" height="52" rx="12" fill="#eef0f2"/><circle cx="32" cy="32" r="23" fill="#1c8ef0"/><circle cx="32" cy="32" r="20.500" fill="none" stroke="#bfe0fa" stroke-width="2.500" stroke-dasharray="1 2"/><path fill="#f03c32" d="M46 18L29.500 29.500l5 5z"/><path fill="#f4f4f4" d="M18 46l11.500-16.500 5 5z"/></svg></div>
  <div class="ic run"><svg viewBox="0 0 64 64"><rect x="6" y="6" width="52" height="52" rx="12" fill="#f8f8f8"/><path fill="#db4437" d="M32 32L13.500 21.500a21.500 21.500 0 0 1 37.100 0z"/><path fill="#0f9d58" d="M32 32L31 53.500A21.500 21.500 0 0 1 13.500 21.500z"/><path fill="#ffcd40" d="M32 32l18.600-10.500A21.500 21.500 0 0 1 31 53.500z"/><circle cx="32" cy="32" r="10.500" fill="#fff"/><circle cx="32" cy="32" r="8.500" fill="#3b7de9"/></svg></div>
  <div class="ic"><svg viewBox="0 0 64 64"><circle cx="33" cy="34" r="17" fill="#7542e5"/><path fill="url(#gfox)" d="M40 2c2 6 8 9 11 12 10 11 11 28 1 38-11 11-29 11-40 0C3 43 3 30 8 22l1-5 5 4c3-2 7-2 9 0 2 1 6-1 8 1-1 3-4 4-6 6 1 3 5 3 5 4-1 4-5 3-7 5 2 6 10 8 16 3 7-6 5-14 0-19 4 0 8 3 9 6C46 18 38 14 40 2z"/></svg></div>
  <div class="ic"><svg viewBox="0 0 64 64"><rect x="6" y="6" width="52" height="52" rx="12" fill="#1b2a83"/><path fill="#25d3b5" d="M11 24c4 0 8 1 10 4 2-3 6-5 12-5-1 5-4 8-8 9 0 8 2 13 8 18-13 3-23-8-22-26z"/><path fill="#bfe9f2" d="M27 50c16 4 26-8 24-28-8 2-14 8-15 17-1 6-5 9-9 11z"/><path fill="#f2fbff" d="M33 50c12 0 18-10 18-22-6 3-9 8-10 13-1 5-4 7-8 9z"/><g fill="#8fa2e8"><circle cx="24" cy="16" r="1"/><circle cx="32" cy="12" r="1"/><circle cx="38" cy="17" r="1"/></g></svg></div>
  <div class="ic"><svg viewBox="0 0 64 64"><rect x="5" y="5" width="54" height="54" rx="12" fill="#fff"/><path fill="#fb4a1e" d="M24 9h16l4 4 4-1 4 6-2 5 1 4-8 22-11 7-11-7-8-22 1-4-2-5 4-6 4 1z"/><path fill="#fff" d="M32 17l9-1 5 7-2 4 1 3-8 10 2 4-7 5-7-5 2-4-8-10 1-3-2-4 5-7z"/><path d="M23 26l6 3M41 26l-6 3M27 39l5-3 5 3M32 28v8" stroke="#fb4a1e" stroke-width="2.500" fill="none"/></svg></div>
  <div class="ic"><svg viewBox="0 0 64 64"><rect x="6" y="6" width="52" height="52" rx="12" fill="#fff"/><path fill="#0065a9" d="M13 25l4-3 25 21v8L13 28z"/><path fill="#007acc" d="M13 39l4 3 25-21v-8L13 36z"/><path fill="#1f9cf0" d="M41 13l9 4v30l-9 4z"/></svg></div>
  <div class="ic"><svg viewBox="0 0 64 64"><circle cx="28" cy="32" r="28" fill="#f7941e"/><circle cx="34" cy="32" r="28.500" fill="#2c2255"/><path d="M14 40h40c-4 14-30 18-40 0z" fill="#443a80"/><path d="M8 26h54M7 32h56M8 38.500h54" stroke="#fff" stroke-width="3"/></svg></div>
  <div class="ic run"><svg viewBox="0 0 64 64"><path fill="#fe2e7c" d="M8 3l14 5-4 20-12 7z"/><path fill="#fc801d" d="M8 3l10 0 12 10-20 12z"/><path fill="#087cfa" d="M40 4l20 16-3 28-18 12-8-8z"/><path fill="#e435c8" d="M5 36l20-4 5 18-20 10z"/><path fill="#22c7f5" d="M40 4l8 14-12 4z"/><rect x="14" y="14" width="36" height="36" fill="#0a0a0a"/><text class="lg" x="18" y="33">IJ</text><path d="M18 44h14" stroke="#fff" stroke-width="3"/></svg></div>
  <div class="ic"><svg viewBox="0 0 64 64"><rect x="7" y="7" width="50" height="50" fill="url(#gij)"/><rect x="14" y="14" width="36" height="36" fill="#000"/><text class="lg" x="18" y="33">IJ</text><path d="M18 44h14" stroke="#fff" stroke-width="3"/></svg></div>
  <div class="ic"><svg viewBox="0 0 64 64"><rect x="7" y="7" width="50" height="50" fill="url(#gpc)"/><rect x="14" y="14" width="36" height="36" fill="#000"/><text class="lg" x="17" y="33">PC</text><path d="M18 44h14" stroke="#fff" stroke-width="3"/></svg></div>
  <div class="ic run"><svg viewBox="0 0 64 64"><rect x="8" y="7" width="49" height="50" rx="11" fill="#c8ccd0"/><rect x="9.500" y="8.500" width="46" height="47" rx="10" fill="#000"/><rect x="14" y="13" width="37" height="38" rx="5" fill="#182226"/><text class="sh" x="15" y="25">$</text><path fill="#0a6b2a" d="M24 14h5v11h-5z"/></svg></div>
  <div class="ic"><svg viewBox="0 0 64 64"><circle cx="32" cy="32" r="28.500" fill="#fff"/><path fill="#3ddc84" d="M22 22a10 9 0 0 1 20 0z"/><path fill="#3f87f5" d="M18 22h28v24h-8v-8H26v8h-8z"/><path d="M32 26l-6 22M32 26l6 22M27 40h10" stroke="#12304a" stroke-width="3" fill="none"/></svg></div>
  <div class="ic"><svg viewBox="0 0 64 64"><rect x="6" y="6" width="50" height="52" rx="11" fill="#1a96f4"/><rect x="9" y="9" width="44" height="46" rx="9" fill="none" stroke="#79c6fb"/><path d="M34 17L17 46M24 17l18 29M13 38h36" stroke="#9bd4fc" stroke-width="3"/><path d="M45 9L26 57" stroke="#2b2d31" stroke-width="6" stroke-linecap="round"/><path fill="#43464b" d="M34 5c8-5 20 0 26 5l1 7-5-4-10 1-5-5z"/></svg></div>
  <div class="ic"><svg viewBox="0 0 64 64"><path fill="#a51f1f" d="M32 0l16 9v10L32 28v36L0 46V14z"/><path fill="#e0352e" d="M32 0v20l16-9v7L32 28 0 46V14z"/><path fill="#c62b28" d="M0 24l32 15 16-8v6L32 47 0 34zM0 36l32 14 16-8v5L32 64 0 46z"/><path fill="#c62b28" d="M44 18l8-4v32l-8 5zM55 24l8-3v22l-8 5z"/><path fill="#a51f1f" d="M32 47l16-9v9L32 64z"/></svg></div>
  <div class="ic"><svg viewBox="0 0 64 64"><path fill="#336791" stroke="#fff" stroke-width="2" d="M12 1c8-1 12 1 16 1 5-2 9-2 13 0 8-2 17-2 20 4 3 8-3 24-9 32 3 2 6 1 9 1-2 5-8 6-12 5l-2 14c-2 6-12 7-13 0V40c-4 4-9 0-9-2-4 8-10 6-14-5C7 22 0 4 12 1z"/><path d="M25 17c0-10 14-10 14 0 0 8 3 12 6 20M25 17c3 8-2 14-1 21M39 3c8 6 12 16 7 24" fill="none" stroke="#fff" stroke-width="1.600"/></svg></div>
  <div class="ic"><svg viewBox="0 0 64 64"><rect x="1" y="1" width="62" height="62" rx="7" fill="url(#gmysql)"/><path d="M10 10c8-2 14 3 19 10 5 8 6 15 15 19l9 10-13-6c-6 0-8-1-10-5l-4 8c-6-4-6-10-8-17-2-5-9-12-8-19z" fill="none" stroke="#fff" stroke-width="2"/><path d="M46 6c-3 3-2 8 2 8l8 5" stroke="#fff" stroke-width="4" fill="none"/><path d="M51 6c2 2 3 5 0 7" stroke="#fff" stroke-width="3" fill="none"/></svg></div>
  <div class="ic"><svg viewBox="0 0 64 64"><path fill="#a8c4ea" stroke="#6f94c9" d="M9 12v42c0 6 38 6 38 0V12z"/><path d="M9 26c0 6 38 6 38 0M9 40c0 6 38 6 38 0" fill="none" stroke="#f0f6ff" stroke-width="2"/><ellipse cx="28" cy="12" rx="19" ry="6.500" fill="#d7e6fa" stroke="#86a6d6"/><circle cx="44" cy="47" r="12" fill="#44b71f" stroke="#2f8a12"/><path fill="#fff" d="M40 40l10 7-10 7z"/></svg></div>
  <div class="ic"><svg viewBox="0 0 64 64"><circle cx="32" cy="32" r="32" fill="#fff"/><path fill="#10aa50" d="M32 10c14 15 14 30 0 42C18 40 18 25 32 10z"/><path fill="#12924f" d="M32 10c14 15 14 30 0 42z"/><path d="M32 48v8" stroke="#b8c4c2" stroke-width="2"/></svg></div>
  <div class="ic"><svg viewBox="0 0 64 64"><rect x="6" y="6" width="52" height="52" rx="12" fill="#fff"/><path fill="#3b2a22" d="M13 12c8-1 9 4 11 9 0-6 12-8 16-3 5 2 4 8 1 10 4 6 3 16-1 22-8 4-16 2-19-1-2-8 2-12 2-19-6-4-10-11-10-18z"/><path fill="#b08e73" d="M30 27c6 0 8 6 4 20-5-4-7-12-4-20z"/><circle cx="44" cy="43" r="9.500" fill="#4fb0b5"/><text class="ce" x="38" y="47">CE</text></svg></div>
  <div class="ic"><svg viewBox="0 0 64 64"><path fill="url(#gsilver)" stroke="#555" d="M3 10v44c0 10 58 10 58 0V10z"/><path d="M3 24c0 10 58 10 58 0M3 40c0 10 58 10 58 0" fill="none" stroke="#6c6c6c" stroke-width="3"/><path d="M3 26c0 10 58 10 58 0M3 42c0 10 58 10 58 0" fill="none" stroke="#eee" stroke-width="1.500"/><ellipse cx="32" cy="10" rx="29" ry="8.500" fill="#b9b9b9" stroke="#666"/></svg></div>
  <div class="ic"><svg><use href="#d-docker"/></svg></div>
  <div class="ic"><svg viewBox="0 0 64 64"><rect x="6" y="6" width="52" height="52" rx="12" fill="#ff6c37"/><circle cx="44" cy="20" r="5" fill="#fff"/><path fill="#fff" d="M42 24L28 32 16 48l8-5-2 5 18-18z"/><path d="M38 24l-14 20" stroke="#ff6c37"/></svg></div>
  <div class="ic"><svg viewBox="0 0 64 64"><circle cx="32" cy="32" r="28" fill="#fff"/><path fill="#00a82d" d="M26 12c7-1 12 0 14 3 8 1 9 4 9 12 0 14-2 25-9 26-7 0-6-9 0-8v4c3 0 3-5 1-7-4-1-5 1-6-3-5 2-14 3-17-3-3-5-4-10-4-13h10c2 0 2-1 2-11z"/><path d="M24 13L14 22h10z" fill="#00a82d"/><circle cx="41" cy="31" r="2" fill="#fff"/></svg></div>
  <div class="ic"><svg viewBox="0 0 64 64"><path fill="#fff" d="M6 9l40-4 12 9v41l-41 4L6 46z"/><path fill="#111" d="M8 11l37-3 9 7-34 3zM8 14l9 7v33L8 44z"/><path fill="#111" fill-rule="evenodd" d="M19 19l37-3v38l-37 3zM22 22v31l31-2.500V19.500z"/><text class="no" x="26" y="47">N</text></svg></div>
  <div class="ic"><svg viewBox="0 0 64 64"><circle cx="32" cy="32" r="28" fill="#0454e4"/><path fill="#fff" d="M32 18a12 12 0 0 1 4 23.300V50h-8v-8.700A12 12 0 0 1 32 18z"/><circle cx="32" cy="30" r="4.500" fill="#0454e4"/></svg></div>
  <div class="ic"><svg viewBox="0 0 64 64"><rect x="6" y="6" width="52" height="52" rx="12" fill="#fff"/><g stroke-width="7" stroke-linecap="round"><path stroke="#36c5f0" d="M27 18v0M17.500 27.500H27"/><path stroke="#2eb67d" d="M37 17.500V27M46.500 27.500h0"/><path stroke="#ecb22e" d="M37 37h9.500M37 46.500h0"/><path stroke="#e01e5a" d="M27 37v9.500M17.500 37h0"/></g></svg></div>
  <div class="ic"><svg viewBox="0 0 64 64"><rect x="6" y="6" width="52" height="52" rx="12" fill="url(#gdisc)"/><path fill="#fff" d="M20 21l8-3 1.500 2.500h5L36 18l8 3c5 7 7 14 7 21l-8 5-3-4-1-1H25l-1 1-3 4-8-5c0-7 2-14 7-21z"/><ellipse cx="26" cy="34" rx="3.500" ry="4" fill="#5b68f0"/><ellipse cx="38" cy="34" rx="3.500" ry="4" fill="#5b68f0"/></svg></div>
  <div class="ic"><svg viewBox="0 0 64 64"><rect x="6" y="6" width="52" height="52" rx="12" fill="url(#gqt)"/><circle cx="32" cy="31" r="17" fill="#1eb5ef" stroke="#b9c6d8" stroke-width="6"/><path d="M34 34l17 17" stroke="#c3c7cc" stroke-width="7"/></svg></div>
  <i class="sep"></i>
  <div class="ic"><svg viewBox="0 0 64 64"><path fill="#e8e8ec" d="M4 3h28a28.500 28.500 0 1 1-28 28z"/><circle cx="32" cy="31" r="23.500" fill="#0d12d8" stroke="#15154a" stroke-width="2"/><path fill="#5a78f5" opacity=".6" d="M9 31a23 22 0 0 1 46 0c-14 3-32 3-46 0z"/><path fill="#fff" d="M26 12l10 18 10 4-7 2 2 15-12-18-10-2 8-3z"/></svg></div>
  <div class="ic"><svg viewBox="0 0 64 64"><rect x="6" y="6" width="52" height="52" rx="12" fill="url(#gmail)"/><rect x="14" y="20" width="37" height="24" rx="2" fill="#ececec"/><path d="M15 21l15 14q2.500 2 5 0L50 21M15 43l12-12M50 43L38 31" fill="none" stroke="#8d9096" stroke-width="1.500"/></svg></div>
  <div class="ic"><svg><use href="#d-docker"/></svg></div>
  <i class="sep"></i>
  <div class="ic"><svg viewBox="0 0 64 64"><path fill="#d9d9dc" opacity=".95" d="M9 8h46l-5 46c-1 9-35 9-36 0z"/><ellipse cx="32" cy="8" rx="22.500" ry="4.500" fill="#8e8e94" stroke="#f0f0f0" stroke-width="1.500"/><path fill="#f4f4f4" d="M13 8l8-5 6 3 7-5 6 4 5-2 5 5-16 5z"/><path fill="#3a3a3e" d="M18 8l6-3 3 6zM38 5l5 6-8-1z"/><path fill="#2aa6d8" d="M27 7h5v3h-5z"/><path fill="#b5512f" d="M39 8h4v3h-4z"/></svg></div>
</footer>
</body>
</html>
```
FILE: styles.css
```css
* { box-sizing: border-box; }
html, body { margin: 0; width: 2880px; height: 1800px; overflow: hidden; }
body {
  display: flex; flex-direction: column;
  font-family: Roboto, "Noto Sans CJK KR", sans-serif;
  background:
    linear-gradient(90deg, #4f0ba6 0, #4209b5 30%, #3a08c0 55%, #2e04a8 100%) 0 0 / 100% 48px no-repeat,
    linear-gradient(90deg, #0e0326 0, #15042f 40%, #1a0440 63%, #48006a 66%, #44006a 78%, #200040 90%, #150035 100%);
}
svg { display: block; flex: none; }
h1, h2, h3, p { margin: 0; font-weight: 500; }
.defs { position: absolute; }
.st { fill: none; stroke: currentColor; stroke-width: 2; stroke-linecap: round; stroke-linejoin: round; }

/* macOS menu bar */
.menubar {
  height: 48px; flex: none; display: flex; justify-content: space-between; align-items: center;
  padding: 0 36px 3px 40px; color: #f0e8fc;
  font: 500 25px Inter, "Noto Sans CJK KR", sans-serif;
}
.menus, .status { display: flex; align-items: center; height: 100%; }
.menus span { margin-left: 41px; letter-spacing: -.5px; white-space: nowrap; }
.menus .app { margin-left: 40px; font-weight: 700; font-size: 26px; letter-spacing: .1px; margin-right: -1px; }
.s-a { width: 32px; height: 32px; margin: 0 0 0 38px; border-radius: 5px; background: #e9e2f8; color: #3905bb; text-align: center; line-height: 32px; font-size: 26px; font-weight: 400; }
.s-bt { margin-left: 43px; }
.s-bat { margin-left: 40px; }
.s-wifi { margin-left: 36px; }
.s-find { margin-left: 36px; }
.s-cc { margin-left: 37px; }
.s-siri { width: 28px; height: 28px; margin-left: 34px; border-radius: 50%; background: radial-gradient(circle at 50% 50%, #fff 0, #7ec8d8 20%, transparent 45%), conic-gradient(#3a9c7c, #1c7fb5, #2c3fa0, #8a1c6a, #c93a4a, #2f6f5a, #3a9c7c); }
.clock { margin-left: 32px; font-size: 26px; letter-spacing: -.15px; white-space: nowrap; }

/* browser window */
.window { margin-top: 2px; height: 1652px; flex: none; border-radius: 20px; overflow: hidden; background: #111217; display: flex; flex-direction: column; box-shadow: 0 0 0 2px #0a0512; }
.tabs { height: 86px; flex: none; background: #dfe1e5; display: flex; align-items: flex-end; }
.lights { display: flex; gap: 16px; margin: 0 66px 30px 42px; }
.lights i { width: 24px; height: 24px; border-radius: 50%; }
.l-r { background: #ff5f57; }
.l-y { background: #febc2e; }
.l-g { background: #1fc840; }
.tab { height: 68px; display: flex; align-items: center; color: #3c4043; font: 24px Inter, "Noto Sans CJK KR", sans-serif; letter-spacing: -.4px; }
.tab:not(.active) { width: 452px; }
.rocket { margin: 0 12px 0 17px; }
.tab .x { margin-left: auto; color: #3c4043; }
.tab:not(.active) .x { margin-right: 18px; }
.tab .x .st { stroke-width: 2.5; }
.tab.active { width: 480px; background: #fff; border-radius: 16px 16px 0 0; padding: 0 20px 0 24px; }
.tab-t { white-space: nowrap; overflow: hidden; margin-bottom: 2px; }
.tab-t.ko { letter-spacing: -1px; }
.tab-t.fade { width: 350px; margin-left: 17px; letter-spacing: -.3px; -webkit-mask-image: linear-gradient(90deg, #000 300px, transparent 350px); mask-image: linear-gradient(90deg, #000 300px, transparent 350px); }
.plus { margin: 0 0 22px 32px; }
.tabmenu { margin: 0 34px 28px auto; }
.toolbar { height: 74px; flex: none; background: #fff; border-bottom: 2px solid #d7d9dc; display: flex; align-items: center; }
.navbtns { display: flex; gap: 35px; width: 216px; padding-left: 30px; }
.omnibox { width: 1872px; height: 56px; border-radius: 28px; background: #f1f3f4; display: flex; align-items: center; padding: 0 18px 0 24px; color: #5f6368; font: 28px Inter, "Noto Sans CJK KR", sans-serif; }
.warn { margin: 0 19px 0 18px; padding-right: 17px; font-size: 25px; border-right: 2px solid #bfc1c4; line-height: 32px; letter-spacing: 0; }
.url { margin-right: auto; letter-spacing: .2px; }
.url b { font-weight: 400; color: #202124; }
.omnibox > svg ~ svg { margin-left: 36px; }
.omnibox > svg.bm { margin-left: 34px; }
.exts { flex: 1; display: flex; justify-content: space-between; align-items: center; padding: 0 28px 0 27px; }
.exts svg { width: 32px; height: 32px; }
.avatar { width: 44px; height: 44px; margin: 0 -6px; border-radius: 50%; background: #5b6abf; color: #fff; font-size: 18px; line-height: 42px; text-align: center; }

/* Grafana shell */
.grafana { flex: 1; min-height: 0; display: flex; color: #ccccdc; letter-spacing: .01071em; -webkit-text-stroke: .3px; }
.side { position: relative; width: 114px; flex: none; background: #181b1f; border-right: 2px solid #25282d; display: flex; flex-direction: column; align-items: center; gap: 48px; padding: 40px 0; color: #8e8e99; }
.side > svg { width: 48px; height: 48px; }
.side .logo { width: 46px; }
.side .on { color: #ccccdc; }
.side .push { margin-top: auto; }
.expand { position: absolute; left: 88px; top: 86px; width: 48px; height: 48px; padding: 0; border-radius: 50%; border: 2px solid #2d3035; background: #22252b; color: #ccccdc; }
.expand svg { width: 44px; height: 44px; }
.expand .st { stroke-width: 2.6; }
.mark { position: absolute; left: 16px; top: 328px; width: 8px; height: 48px; border-radius: 4px; background: linear-gradient(#ff8833, #f55f3e); }
.main { flex: 1; min-width: 0; padding: 32px 32px 0; }
.head { height: 64px; display: flex; justify-content: space-between; align-items: center; }
h1 { display: flex; align-items: center; font-size: 36px; font-weight: 400; line-height: 44px; }
h1 > svg:first-child { margin: 0 16px 0 0; }
h1 .sl { margin: 0 9px 0 16px; }
h1 .name { letter-spacing: -.4px; }
.h-star { margin-left: 16px; }
.h-share { margin-left: 32px; }
.actions { display: flex; gap: 16px; color: #9a9aa5; font-size: 28px; font-weight: 500; }
.actions svg { width: 36px; height: 36px; }
.actions .wide svg { width: 48px; height: 28px; }
.btn { width: 72px; height: 64px; display: flex; align-items: center; justify-content: center; background: #181b1f; border: 2px solid #25282d; border-radius: 4px; }
.btn.wide { width: 84px; }
.group { height: 64px; display: flex; background: #181b1f; border: 2px solid #25282d; border-radius: 4px; }
.time, .seg, .every { display: flex; align-items: center; height: 100%; }
.time { width: 280px; padding-left: 16px; }
.time span { margin: 0 16px; width: 147px; white-space: nowrap; letter-spacing: .4px; }
.seg { width: 70px; justify-content: center; border-left: 2px solid #25282d; }
.seg.first { border-left: 0; border-right: 2px solid #25282d; }
.every { width: 103px; padding-left: 17px; }
.every span { margin-right: 7px; }
.actions svg.dn, .dn { width: 32px; height: 32px; }
.vars { margin-top: 32px; display: flex; gap: 8px; }
.vars label { width: 188px; height: 64px; border: 2px solid #25282d; border-radius: 4px; background: #181b1f; color: #6e9fff; font-size: 24px; font-weight: 500; line-height: 60px; text-align: center; }
.select { width: 538px; height: 64px; display: flex; align-items: center; padding-left: 16px; border: 2px solid #2c2f35; border-radius: 4px; font-size: 28px; white-space: nowrap; letter-spacing: .4px; }
.select .dn { margin-left: 2px; }
.rowhead { height: 92px; display: flex; align-items: center; }
.rowhead h2 { font-size: 32px; line-height: 40px; margin: 0; }
.rowhead .r-cog, .rowhead .r-bin { width: 32px; height: 32px; color: #8e8e99; margin-top: 3px; }
.rowhead .r-cog { margin-left: 33px; }
.rowhead .r-bin { margin-left: 33px; width: 30px; }
.grid4, .grid6, .grid2 { display: grid; gap: 16px; margin-right: -2px; }
.grid4 { grid-template-columns: repeat(4, 1fr); }
.grid6 { grid-template-columns: repeat(6, 1fr); }
.grid2 { grid-template-columns: repeat(2, 1fr); margin-top: 16px; }

/* panels */
.panel { position: relative; min-width: 0; background: #181b1f; border: 2px solid #222529; border-radius: 6px; overflow: hidden; }
.grid4 .panel { height: 516px; }
.panel h3 { height: 64px; line-height: 64px; font-size: 28px; text-align: center; white-space: nowrap; letter-spacing: .1px; -webkit-text-stroke: .5px; }
.tall { height: 420px; }
.corner { position: absolute; left: 0; top: 0; }
.chart { width: 100%; font-size: 24px; letter-spacing: 0; }
.chart text { fill: #ccccdc; }
.g { fill: none; stroke: #3e4044; stroke-width: 2; }
.g.faint { stroke: #272b2f; }
.y { text-anchor: end; }
.xl { text-anchor: middle; }
.nodata { text-anchor: middle; font-size: 28px; letter-spacing: .3px; }
.legend { padding: 0 25px 0 24px; font-size: 24px; }
.lh { height: 51px; display: flex; justify-content: flex-end; gap: 20px; padding-right: 21px; line-height: 51px; color: #33a2e5; font-weight: 500; }
.lr { height: 43px; line-height: 42px; display: flex; align-items: center; padding: 0 6px; }
.lr i { width: 28px; height: 8px; border-radius: 2px; margin-top: 3px; }
.lr span { margin-top: -1px; }
.green { background: #7eb26d; }
.gold { background: #eab839; }
.lr .nm { margin-left: 20px; margin-right: auto; }
.v2 { width: 66px; text-align: right; }
.v2.n { width: 62px; margin-right: -3px; }
.v2.t { width: 69px; }
.checks .lr { margin-bottom: 9px; padding-right: 5px; }
.alt { background: #22252b; }
.stat { height: 212px; }
.stat p { display: flex; align-items: baseline; justify-content: center; height: 146px; line-height: 144px; font-size: 96px; letter-spacing: -.013em; -webkit-text-stroke: 1.6px; }
.stat small { font-size: 57px; margin-left: 16px; letter-spacing: -.5px; -webkit-text-stroke: .8px; }
.stat.sm p { font-size: 86px; }
.stat.sm small { font-size: 51px; margin-left: 14px; }

/* dock */
.dock { margin: 2px 50px 0 51px; height: 86px; flex: none; padding-left: 3px; display: flex; border: 2px solid rgba(190, 170, 215, .5); border-radius: 22px; background: linear-gradient(90deg, #5f5276 0, #5e5470 25%, #665289 55%, #86509f 62%, #8f52ab 67%, #8253a0 75%, #69538a 85%, #625380 100%); }
.ic { width: 67.66px; flex: none; display: flex; flex-direction: column; align-items: center; padding-top: 6px; }
.ic svg { width: 64px; height: 64px; }
.ic.run::after { content: ""; width: 8px; height: 8px; border-radius: 50%; background: #0a0710; margin-top: 2px; }
.sep { width: 2px; height: 62px; margin: 10px 14.5px 0; background: #3a2a66; flex: none; }
.lg { font: 700 19px "Noto Sans", sans-serif; fill: #fff; }
.sh { font: 700 15px "Liberation Mono", monospace; fill: #30d158; }
.ce { font: 500 10px Roboto, sans-serif; fill: #fff; }
.no { font: 700 31px "Liberation Serif", serif; fill: #111; }
```
